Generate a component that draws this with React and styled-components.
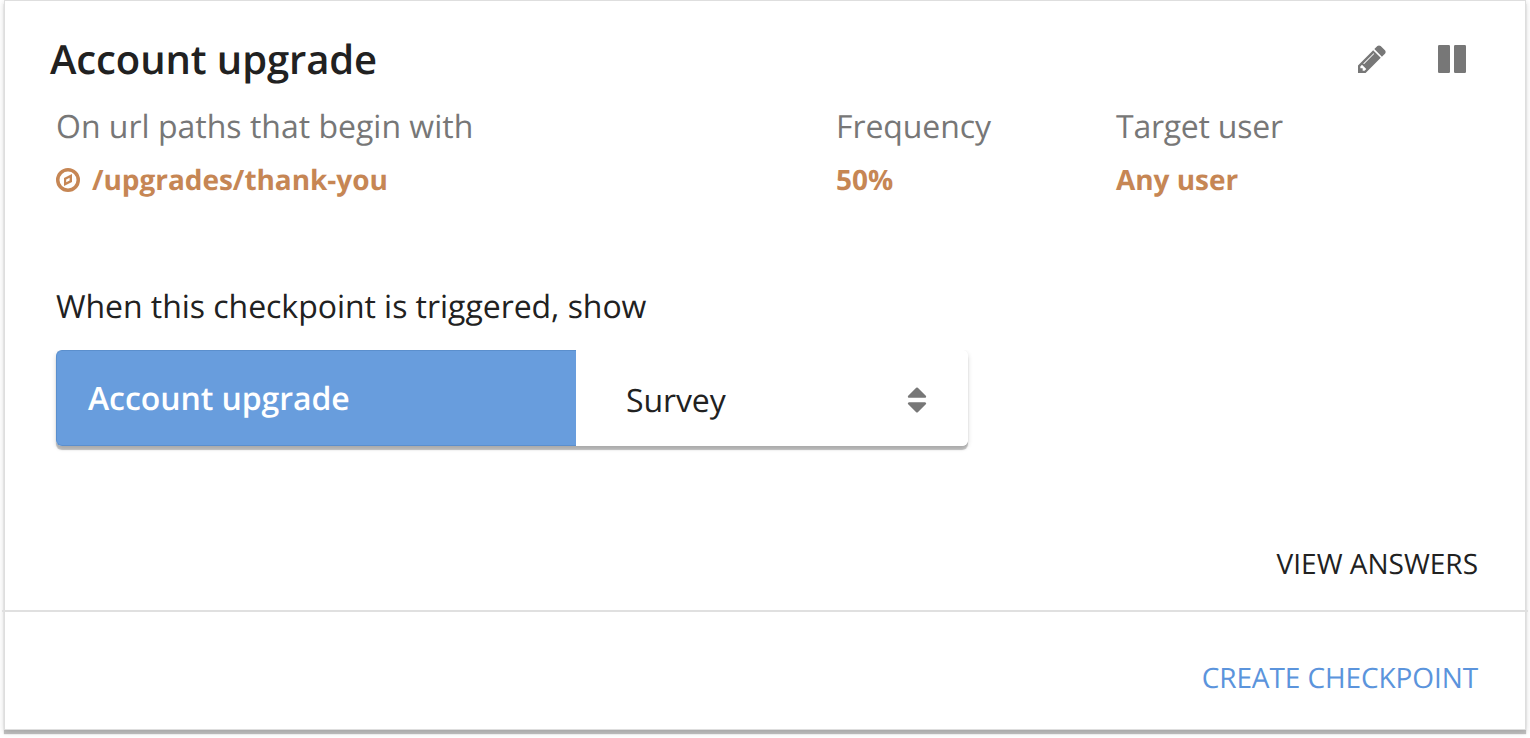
import React from 'react';
import styled, { createGlobalStyle } from 'styled-components';

const Global = createGlobalStyle`
  * { box-sizing: border-box; }
  body {
    margin: 0; min-height: 100vh; background: #fff; color: #212121;
    font-family: "Open Sans", sans-serif; text-rendering: geometricPrecision;
  }
`;
const Card = styled.section`
  width: 1522px; height: 730px; margin-left: 4px;
  display: flex; flex-direction: column;
  background: #fff; border: 1px solid #dedede;
  box-shadow: 0 4px 1px 0 rgba(0, 0, 0, 0.24), 0 2px 6px rgba(0, 0, 0, 0.16);
`;
const Body = styled.div`
  height: 609px; padding: 28px 47px 0 51px;
  display: flex; flex-direction: column;
`;
const Header = styled.header`
  height: 60px; margin-left: -6px;
  display: flex; justify-content: space-between; align-items: center;
`;
const Title = styled.h1`
  margin: 0; font-size: 40px; font-weight: 600; line-height: 60px; letter-spacing: -0.1px;
`;
const Actions = styled.div`
  display: flex; align-items: center; gap: 52px; margin-right: 12px; color: #777;
`;
const Icon = styled.svg`
  display: block; flex: none; fill: currentColor;
  width: ${p => p.$size}px; height: ${p => p.$size}px;
`;
const Facts = styled.dl`
  margin: 15px 0 0; display: grid; grid-template-columns: 780px 280px 1fr;
`;
const Term = styled.dt`
  font-size: 32px; line-height: 46px; color: #777;
  letter-spacing: ${p => p.$tracking || 0}px;
`;
const Value = styled.dd`
  margin: 10px 0 0; display: flex; align-items: center; gap: 12px;
  font-size: 28px; font-weight: 700; line-height: 40px; letter-spacing: -0.05px; color: #c68654;
`;
const Prompt = styled.p`
  margin: 84px 0 0; font-size: 32px; line-height: 46px; letter-spacing: -0.045px;
`;
const Picker = styled.div`
  width: 912px; height: 96px; margin-top: 20px; display: flex; border-radius: 6px;
  box-shadow: 0 4px 1px 0 rgba(0, 0, 0, 0.24), 0 2px 5px rgba(0, 0, 0, 0.16);
  clip-path: inset(0 -8px -10px -8px);
`;
const PickerName = styled.div`
  width: 520px; padding: 1px 31px 0; background: #689ddd; border: 1px solid #5b8fcd; border-right: 0;
  border-radius: 6px 0 0 6px; color: #fff; font-size: 32px; font-weight: 600; line-height: 94px;
  letter-spacing: -0.08px;
`;
const Select = styled.div`
  flex: 1; padding: 4px 35px 0 50px; display: flex; align-items: center; justify-content: space-between;
  background: #fff; border-radius: 0 6px 6px 0; font-size: 32px; letter-spacing: -0.1px;
`;
const Chevrons = styled.span`color: #777; margin-top: -2px; padding-top: 1px;`;
const Action = styled.button`
  padding: 0; border: 0; background: none; text-rendering: inherit;
  font-family: inherit; font-size: 28px; line-height: 40px;
  letter-spacing: ${p => p.$primary ? '-0.1px' : '0'};
  color: ${p => p.$primary ? '#5b94dc' : '#212121'};
`;
const BodyActions = styled.div`
  display: flex; justify-content: flex-end; margin-top: 98px;
`;
const Footer = styled.footer`
  flex: 1; margin: 0 -3px; border-top: 2px solid #e0e0e0; padding: 46px 50px 0;
  display: flex; align-items: flex-start; justify-content: flex-end;
`;

const Pencil = () => (
  <Icon $size={28} viewBox="128 128 1536 1536">
    <path d="M491 1536l91-91-235-235-91 91v107h128v128h107zm523-928q0-22-22-22-10 0-17 7l-542 542q-7 7-7 17 0 22 22 22 10 0 17-7l542-542q7-7 7-17zm-54-192l416 416-832 832h-416v-416zm683 96q0 53-37 90l-166 166-416-416 166-165q36-38 90-38 53 0 91 38l235 234q37 39 37 91z" />
  </Icon>
);
const Pause = () => (
  <Icon $size={28} viewBox="0 0 28 28">
    <rect width="12" height="28" rx="1.2" /><rect x="16" width="12" height="28" rx="1.2" />
  </Icon>
);
const Compass = () => (
  <Icon $size={24} viewBox="128 128 1536 1536">
    <path fillRule="evenodd" d="M780 1040l220-110V752l-220 110zM1152 512v512l-512 256V768zM896 352a544 544 0 1 0 0 1088a544 544 0 1 0 0-1088zM896 128a768 768 0 1 1 0 1536a768 768 0 1 1 0-1536z" />
  </Icon>
);
const Sort = () => (
  <Icon $size={32} viewBox="0 0 1792 1792">
    <path d="M1408 1088q0 26-19 45l-448 448q-19 19-45 19t-45-19l-448-448q-19-19-19-45t19-45 45-19h896q26 0 45 19t19 45zm0-384q0 26-19 45t-45 19h-896q-26 0-45-19t-19-45 19-45l448-448q19-19 45-19t45 19l448 448q19 19 19 45z" />
  </Icon>
);

export default function App() {
  return (
    <>
      <Global />
      <Card>
        <Body>
          <Header>
            <Title>Account upgrade</Title>
            <Actions><Pencil /><Pause /></Actions>
          </Header>
          <Facts>
            <div><Term>On url paths that begin with</Term><Value><Compass />/upgrades/thank-you</Value></div>
            <div><Term $tracking={-0.1}>Frequency</Term><Value>50%</Value></div>
            <div><Term $tracking={-0.25}>Target user</Term><Value>Any user</Value></div>
          </Facts>
          <Prompt>When this checkpoint is triggered, show</Prompt>
          <Picker>
            <PickerName>Account upgrade</PickerName>
            <Select>Survey<Chevrons><Sort /></Chevrons></Select>
          </Picker>
          <BodyActions><Action>VIEW ANSWERS</Action></BodyActions>
        </Body>
        <Footer><Action $primary>CREATE CHECKPOINT</Action></Footer>
      </Card>
    </>
  );
}
